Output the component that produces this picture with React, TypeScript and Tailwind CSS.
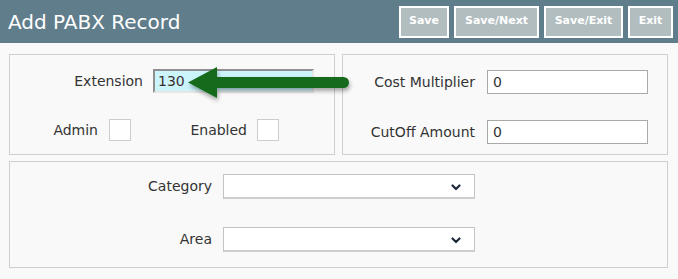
import React from "react";

const font = { fontFamily: '"DejaVu Sans", Verdana, sans-serif' };

function Chevron() {
  return (
    <svg width="10" height="7" viewBox="0 0 10 7" className="absolute right-[13px] top-[9px]">
      <path d="M1.5 1.5 L5 5 L8.5 1.5" fill="none" stroke="#1f2a3a" strokeWidth="2.2" strokeLinecap="round" strokeLinejoin="round" />
    </svg>
  );
}

export default function App() {
  const btn =
    "h-[32px] border-2 border-white bg-[#b2bdbf] text-white text-[11px] font-bold px-[9px] flex items-center justify-center";
  return (
    <div className="relative w-[678px] h-[279px] bg-[#f9f9f9] overflow-hidden" style={font}>
      <div className="h-[43px] bg-[#607d8b] flex items-center justify-between pl-[8px] pr-[5px]">
        <div className="text-white text-[20px] leading-none">Add PABX Record</div>
        <div className="flex gap-[5px]">
          <div className={btn + " w-[50px]"}>Save</div>
          <div className={btn + " w-[85px]"}>Save/Next</div>
          <div className={btn + " w-[79px]"}>Save/Exit</div>
          <div className={btn + " w-[45px]"}>Exit</div>
        </div>
      </div>

      <div className="pl-[9px] pt-[11px] w-[668px]">
        <div className="flex gap-[7px] h-[101px]">
          <div className="w-[326px] border border-[#cfcfcf] bg-[#f9f9f9] text-[14px] text-[#333]">
            <div className="flex items-center mt-[14px] h-[24px]">
              <div className="w-[133px] text-right">Extension</div>
              <div className="ml-[10px] w-[161px] h-[24px] bg-[#ccf4fb] border-2 border-t-[#8f8f8f] border-l-[#8f8f8f] border-r-[#e6e6e6] border-b-[#e6e6e6] pl-[3px] flex items-center text-[#3a3030]">
                130
              </div>
            </div>
            <div className="flex items-center mt-[26px] h-[22px]">
              <div className="w-[88px] text-right">Admin</div>
              <div className="ml-[11px] w-[22px] h-[22px] bg-white border border-[#cccccc]" />
              <div className="w-[116px] text-right">Enabled</div>
              <div className="ml-[10px] w-[22px] h-[22px] bg-white border border-[#cccccc]" />
            </div>
          </div>
          <div className="w-[326px] border border-[#cfcfcf] bg-[#f9f9f9] text-[14px] text-[#333]">
            <div className="flex items-center mt-[15px] h-[24px]">
              <div className="w-[132px] text-right">Cost Multiplier</div>
              <div className="ml-[12px] w-[161px] h-[24px] bg-white border border-[#a9a9a9] pl-[5px] flex items-center">0</div>
            </div>
            <div className="flex items-center mt-[26px] h-[24px]">
              <div className="w-[132px] text-right">CutOff Amount</div>
              <div className="ml-[12px] w-[161px] h-[24px] bg-white border border-[#a9a9a9] pl-[5px] flex items-center">0</div>
            </div>
          </div>
        </div>

        <div className="mt-[6px] h-[107px] w-[659px] border border-[#cfcfcf] bg-[#f9f9f9] text-[14px] text-[#333]">
          <div className="flex items-center mt-[12px] h-[25px]">
            <div className="w-[202px] text-right">Category</div>
            <div className="relative ml-[11px] w-[252px] h-[25px] bg-white border border-[#c4c4c4] border-b-2 border-b-[#cdcdcd]">
              <Chevron />
            </div>
          </div>
          <div className="flex items-center mt-[28px] h-[25px]">
            <div className="w-[202px] text-right">Area</div>
            <div className="relative ml-[11px] w-[252px] h-[25px] bg-white border border-[#c4c4c4] border-b-2 border-b-[#cdcdcd]">
              <Chevron />
            </div>
          </div>
        </div>
      </div>

      <svg className="absolute left-[184px] top-[62px]" width="172" height="44" viewBox="0 0 172 44">
        <defs>
          <filter id="sh" x="-10%" y="-30%" width="120%" height="180%">
            <feDropShadow dx="1" dy="3" stdDeviation="2" floodColor="#000" floodOpacity="0.35" />
          </filter>
        </defs>
        <g filter="url(#sh)" fill="#146b1f" stroke="#146b1f">
          <line x1="30" y1="20.5" x2="159.5" y2="20.5" strokeWidth="11" strokeLinecap="round" />
          <polygon points="4,20.5 33,5 33,36" strokeWidth="0" />
        </g>
      </svg>
    </div>
  );
}
